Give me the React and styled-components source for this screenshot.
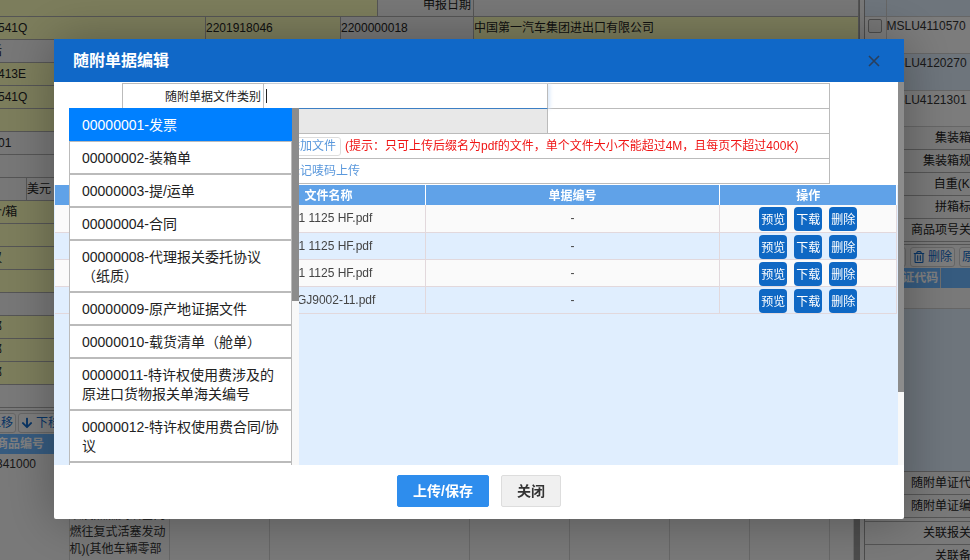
import { useState } from "react";
import styled, { createGlobalStyle } from "styled-components";
import { FaArrowDown, FaArrowUp, FaRegTrashAlt } from "react-icons/fa";

const formRows = [
  [{ width: 380, filled: true }, { width: 96, label: "申报日期" }, {}],
  [
    { width: 208, filled: true, text: "541Q" },
    { width: 135, filled: true, text: "2201918046" },
    { width: 133, text: "2200000018" },
    { filled: true, text: "中国第一汽车集团进出口有限公司" },
  ],
  [{ text: "话", scrolled: true }],
  [{ filled: true, text: "413E" }],
  [{ filled: true, text: "541Q" }],
  [{ filled: true }],
  [{ text: "01" }],
  [{}],
  [{ width: 29 }, { text: "美元" }],
  [{ filled: true, text: "个/箱", scrolled: true }],
  [{ filled: true }],
  [{ filled: true, text: "汉", scrolled: true }],
  [{ filled: true }],
  [{}],
  [{ filled: true, text: "邮", scrolled: true }],
  [{ filled: true, text: "邮", scrolled: true }],
  [{ filled: true, text: "邮", scrolled: true }],
];

const containers = ["MSLU4110570", "MSLU4120270", "MSLU4121301"];

const fileTypes = [
  "00000001-发票",
  "00000002-装箱单",
  "00000003-提/运单",
  "00000004-合同",
  "00000008-代理报关委托协议（纸质）",
  "00000009-原产地证据文件",
  "00000010-载货清单（舱单）",
  "00000011-特许权使用费涉及的原进口货物报关单海关编号",
  "00000012-特许权使用费合同/协议",
  "00000013-其他",
];

const files = [
  "B-1 1125 HF.pdf",
  "B-1 1125 HF.pdf",
  "B-1 1125 HF.pdf",
  "20GJ9002-11.pdf",
];

function Declaration() {
  return (
    <Main>
      <FormBoard>
        {formRows.map((row, i) => (
          <FormRow key={i}>
            {row.map((cell, j) => (
              <FormCell
                key={j}
                $width={cell.width}
                $filled={cell.filled}
                $label={cell.label}
                $scrolled={cell.scrolled}
              >
                {cell.label || cell.text}
              </FormCell>
            ))}
          </FormRow>
        ))}
      </FormBoard>
      <Divider $space={22} />
      <Divider $space={2} />
      <Toolbar $shift>
        <ToolButton type="button">
          <FaArrowUp />
          上移
        </ToolButton>
        <ToolButton type="button">
          <FaArrowDown />
          下移
        </ToolButton>
      </Toolbar>
      <GoodsWrap>
        <Goods>
          <colgroup>
            <col width="69" />
            <col width="100" />
            <col width="100" />
            <col width="200" />
            <col width="100" />
            <col width="100" />
            <col width="80" />
            <col width="80" />
            <col />
          </colgroup>
          <thead>
            <tr>
              <th>商品编号</th>
              <th colSpan={8} />
            </tr>
          </thead>
          <tbody>
            <tr>
              <td>341000</td>
              <td>
                其他专用于或主要用于机动车辆的发动机零件曲轴连杆以及点燃式活塞内燃往复式活塞发动机)(其他车辆零部
              </td>
              <td />
              <td />
              <td />
              <td />
              <td />
              <td />
              <td />
            </tr>
          </tbody>
        </Goods>
        <GoodsScroll />
      </GoodsWrap>
    </Main>
  );
}

function Sidebar() {
  return (
    <Side>
      <ContainerTable>
        <tbody>
          <tr>
            <td />
            <td />
          </tr>
          {containers.map((no) => (
            <tr key={no}>
              <td>
                <input type="checkbox" aria-label={no} />
              </td>
              <td>{no}</td>
            </tr>
          ))}
        </tbody>
      </ContainerTable>
      {["集装箱号", "集装箱规格", "自重(KG)", "拼箱标识", "商品项号关系"].map((t) => (
        <SideLabel key={t}>{t}</SideLabel>
      ))}
      <Divider $space={2} />
      <Toolbar $side>
        <ToolButton type="button">新增</ToolButton>
        <ToolButton type="button">
          <FaRegTrashAlt />
          删除
        </ToolButton>
        <ToolButton type="button">原产地</ToolButton>
      </Toolbar>
      <CodeTable>
        <thead>
          <tr>
            <th>随附单证代码</th>
            <th />
          </tr>
        </thead>
        <tbody>
          <tr>
            <td colSpan={2} />
          </tr>
        </tbody>
      </CodeTable>
      <SideBlank />
      <SideLabel>随附单证代码</SideLabel>
      <SideLabel>随附单证编号</SideLabel>
      <Divider $space={3} />
      <SideLabel>关联报关单</SideLabel>
      <SideLabel>关联备案</SideLabel>
    </Side>
  );
}

export default function App() {
  const [active, setActive] = useState(0);

  return (
    <>
      <GlobalStyle />
      <Page>
        <Declaration />
        <Sidebar />
      </Page>
      <Shade>
        <Dialog role="dialog" aria-labelledby="dialog-title">
          <DialogHeader>
            <h2 id="dialog-title">随附单据编辑</h2>
            <CloseButton type="button" aria-label="关闭窗口">
              <svg width="12" height="12" viewBox="0 0 12 12">
                <path d="M1 1L11 11M11 1L1 11" stroke="#2a3f5c" strokeWidth="1.6" />
              </svg>
            </CloseButton>
          </DialogHeader>
          <DialogBody>
            <Content>
              <UploadForm>
                <Field>
                  <label htmlFor="file-type">随附单据文件类别</label>
                  <InputBox $focused>
                    <Caret />
                    <input id="file-type" type="text" autoComplete="off" />
                  </InputBox>
                </Field>
                <Field>
                  <label htmlFor="file-no" aria-label="随附单据编号" />
                  <InputBox $disabled>
                    <input id="file-no" type="text" readOnly />
                  </InputBox>
                </Field>
                <Field>
                  <span />
                  <UploadLine>
                    <AddButton type="button">添加文件</AddButton>
                    <Hint>
                      (提示：只可上传后缀名为pdf的文件，单个文件大小不能超过4M，且每页不超过400K)
                    </Hint>
                  </UploadLine>
                </Field>
                <Field>
                  <span />
                  <UploadLine>
                    <MarkLink href="#mark">标记唛码上传</MarkLink>
                  </UploadLine>
                </Field>
              </UploadForm>
              <FileTable>
                <colgroup>
                  <col width="21%" />
                  <col width="23%" />
                  <col />
                  <col width="21%" />
                </colgroup>
                <thead>
                  <tr>
                    <th />
                    <th>文件名称</th>
                    <th>单据编号</th>
                    <th>操作</th>
                  </tr>
                </thead>
                <tbody>
                  {files.map((file, i) => (
                    <tr key={i}>
                      <td />
                      <td>{file}</td>
                      <td>-</td>
                      <td>
                        <Actions>
                          <ActionButton type="button">预览</ActionButton>
                          <ActionButton type="button">下载</ActionButton>
                          <ActionButton type="button">删除</ActionButton>
                        </Actions>
                      </td>
                    </tr>
                  ))}
                </tbody>
              </FileTable>
            </Content>
            <ScrollTrack>
              <ScrollThumb $size={81} />
            </ScrollTrack>
            <Dropdown>
              <Options role="listbox" aria-label="随附单据文件类别">
                {fileTypes.map((type, i) => (
                  <Option
                    key={type}
                    role="option"
                    aria-selected={i === active}
                    $active={i === active}
                    onClick={() => setActive(i)}
                  >
                    {type}
                  </Option>
                ))}
              </Options>
              <ScrollTrack $wide>
                <ScrollThumb $size={54} />
              </ScrollTrack>
            </Dropdown>
          </DialogBody>
          <DialogFooter>
            <FooterButton type="button" $primary>
              上传/保存
            </FooterButton>
            <FooterButton type="button">关闭</FooterButton>
          </DialogFooter>
        </Dialog>
      </Shade>
    </>
  );
}

const GlobalStyle = createGlobalStyle`
  * {
    box-sizing: border-box;
  }

  body {
    margin: 0;
    overflow: hidden;
  }

  body, button, input {
    font-family: "Liberation Sans", "Noto Sans CJK SC", sans-serif;
    font-size: 12px;
    line-height: 16px;
    color: #333;
  }

  table {
    border-collapse: collapse;
    table-layout: fixed;
  }
`;

const Page = styled.div`
  display: grid;
  grid-template-columns: minmax(0, 1fr) 106px;
  column-gap: 4px;
  height: 100vh;
  overflow: hidden;
  background: #f2f2f2;
`;

const Main = styled.main`
  display: flex;
  flex-direction: column;
  border-right: 1px solid #999;
  overflow: hidden;
`;

const FormBoard = styled.div`
  margin: -6px 0 0 -2px;
`;

const FormRow = styled.div`
  display: flex;
  height: 23px;
  border-bottom: 1px solid #aaa;
`;

const FormCell = styled.div`
  flex: ${({ $width }) => ($width ? `0 0 ${$width}px` : "1")};
  padding-right: ${({ $label }) => ($label ? "2px" : "0")};
  border-right: 1px solid #aaa;
  background: ${({ $filled }) => ($filled ? "#f8fab8" : "#eee")};
  color: #222;
  line-height: 22px;
  text-align: ${({ $label }) => ($label ? "right" : "left")};
  text-indent: ${({ $scrolled }) => ($scrolled ? "-8px" : "0")};
  white-space: nowrap;
`;

const Divider = styled.div`
  flex: none;
  height: ${({ $space }) => $space + 1}px;
  border-bottom: 1px solid #aaa;
`;

const Toolbar = styled.div`
  display: flex;
  flex: none;
  gap: ${({ $shift }) => ($shift ? "2px" : "4px")};
  height: 23px;
  padding: 2px 0 1px ${({ $side }) => ($side ? "11px" : "0")};
  margin-left: ${({ $shift }) => ($shift ? "-29px" : "0")};
`;

const ToolButton = styled.button`
  display: flex;
  flex: none;
  align-items: center;
  gap: 3px;
  padding: 0 2px;
  border: 1px solid #ccc;
  border-radius: 3px;
  background: #f8f8f8;
  color: #1068c8;
`;

const GoodsWrap = styled.div`
  display: flex;
  flex: 1;
`;

const GoodsScroll = styled.div`
  flex: 0 0 5px;
  background: #999;
`;

const Goods = styled.table`
  flex: 1;

  th {
    height: 20px;
    padding: 0;
    background: #6cb6ff;
    color: #fff;
    text-align: left;
    text-indent: -4px;
    white-space: nowrap;
  }

  td {
    padding: 2px 0;
    border-right: 1px solid #d0d0d0;
    line-height: 17px;
    vertical-align: top;
  }

  td:first-child {
    text-indent: -4px;
  }
`;

const Side = styled.aside`
  display: flex;
  flex-direction: column;
  margin-top: -21px;
  border-left: 1px solid #999;
  overflow: hidden;
`;

const ContainerTable = styled.table`
  flex: none;
  width: 122px;

  tr {
    height: 37px;
    background: #f8f8f8;
  }

  tr:nth-child(odd) {
    background: #dceaf8;
  }

  tr:last-child {
    height: 36px;
  }

  td {
    padding: 1px 0 0;
    border-bottom: 1px solid #ccc;
    vertical-align: top;
  }

  td:first-child {
    width: 21px;
    border-right: 1px solid #ccc;
  }

  input {
    width: 14px;
    height: 14px;
    margin: 1px 3px;
    appearance: none;
    border: 1px solid #999;
    border-radius: 2px;
    background: #eee;
  }
`;

const SideLabel = styled.div`
  flex: none;
  width: 118px;
  height: 23px;
  border-bottom: 1px solid #aaa;
  line-height: 22px;
  text-align: right;
  color: #222;
`;

const CodeTable = styled.table`
  flex: none;
  width: 122px;

  th {
    height: 20px;
    padding: 0;
    background: #6cb6ff;
    color: #fff;
    white-space: nowrap;
    border-right: 1px solid #ddd;
  }

  th:first-child {
    width: 75px;
  }

  td {
    height: 21px;
    border-bottom: 1px solid #ccc;
  }
`;

const SideBlank = styled.div`
  flex: none;
  height: 163px;
  border-bottom: 1px solid #aaa;
  background: #dceaf8;
`;

const Shade = styled.div`
  position: fixed;
  inset: 0;
  display: flex;
  padding: 39px 66px 41px 54px;
  background: rgba(0, 0, 0, 0.5);
`;

const Dialog = styled.section`
  display: flex;
  flex: 1;
  flex-direction: column;
  min-width: 0;
  border-radius: 2px;
  background: #fff;
  box-shadow: 1px 1px 50px rgba(0, 0, 0, 0.3);
`;

const DialogHeader = styled.header`
  display: flex;
  flex: none;
  align-items: center;
  justify-content: space-between;
  height: 43px;
  padding: 0 24px 0 19px;
  background: #1068c8;

  h2 {
    margin: 0;
    font-size: 16px;
    line-height: 24px;
    color: #fff;
  }
`;

const CloseButton = styled.button`
  display: flex;
  padding: 0;
  border: 0;
  background: none;
`;

const DialogBody = styled.div`
  position: relative;
  display: flex;
  flex: 1;
  min-height: 0;
  overflow: hidden;
`;

const Content = styled.div`
  display: flex;
  flex: 1;
  flex-direction: column;
  min-width: 0;
  padding: 1px 1px 0;
  background: linear-gradient(#fff 103px, #e0eefe 103px);
`;

const UploadForm = styled.form`
  margin: 0 67px 1px;
  border: 1px solid #bbb;
  border-bottom: 0;
`;

const Field = styled.div`
  display: grid;
  grid-template-columns: 141px 284px minmax(0, 1fr);
  height: 25px;
  border-bottom: 1px solid #bbb;

  > label,
  > span {
    padding: 1px 2px 0 0;
    border-right: 1px solid #bbb;
    line-height: 24px;
    text-align: right;
    color: #222;
  }
`;

const InputBox = styled.div`
  display: flex;
  align-items: center;
  padding-left: 2px;
  border-right: 1px solid #bbb;
  border-bottom: ${({ $focused }) => ($focused ? "1px solid #3c7fc4" : "0")};
  background: ${({ $disabled }) => ($disabled ? "#e8e8e8" : "#fff")};
  box-shadow: ${({ $focused }) => ($focused ? "2px 0 4px #dbe9fa" : "none")};

  input {
    flex: 1;
    min-width: 0;
    padding: 0;
    border: 0;
    outline: 0;
    background: none;
  }
`;

const Caret = styled.i`
  width: 1px;
  height: 14px;
  background: #222;
`;

const UploadLine = styled.div`
  display: flex;
  grid-column: 2 / -1;
  align-items: center;
  gap: 4px;
  padding-left: 19px;
  white-space: nowrap;
`;

const AddButton = styled.button`
  height: 19px;
  padding: 0 4px;
  border: 1px solid #ddd;
  border-radius: 3px;
  background: #fff;
  line-height: 17px;
  color: #5a98dc;
`;

const Hint = styled.span`
  color: #f01414;
`;

const MarkLink = styled.a`
  padding-left: 5px;
  color: #5a98dc;
  text-decoration: none;
`;

const FileTable = styled.table`
  width: 100%;

  th {
    height: 20px;
    padding: 2px 0 0;
    border-right: 1px solid #fff;
    background: #60a2e8;
    color: #fff;
  }

  td {
    height: 27px;
    padding: 0;
    border-right: 1px solid #e2d8dc;
    border-bottom: 1px solid #e2d8dc;
    text-align: center;
    color: #444;
  }

  td:nth-child(2) {
    padding-left: 2px;
  }

  tbody tr {
    background: #fafafa;
  }

  tbody tr:nth-child(even) {
    background: #e0eefe;
  }
`;

const Actions = styled.div`
  display: flex;
  justify-content: center;
  gap: 7px;
  padding-top: 2px;
`;

const ActionButton = styled.button`
  width: 28px;
  height: 24px;
  padding: 2px 0 0;
  border: 0;
  border-radius: 4px;
  background: #0f68c4;
  color: #fff;
`;

const ScrollTrack = styled.div`
  flex: 0 0 ${({ $wide }) => ($wide ? "7px" : "6px")};
  background: #f8f8f8;
`;

const ScrollThumb = styled.div`
  height: ${({ $size }) => $size}%;
  background: #8c8c8c;
`;

const Dropdown = styled.div`
  position: absolute;
  top: 26px;
  bottom: 0;
  left: 15px;
  display: flex;
  width: 230px;
`;

const Options = styled.ul`
  flex: 1;
  margin: 0;
  padding: 0;
  overflow: hidden;
  background: #fff;
  list-style: none;
`;

const Option = styled.li`
  padding: 7px 10px 5px 12px;
  border: 1px solid ${({ $active }) => ($active ? "#0080ff" : "#bbb")};
  background: ${({ $active }) => ($active ? "#0080ff" : "#fff")};
  font-size: 14px;
  line-height: 19px;
  color: ${({ $active }) => ($active ? "#fff" : "#222")};
`;

const DialogFooter = styled.footer`
  display: flex;
  flex: none;
  justify-content: center;
  gap: 12px;
  height: 54px;
  padding: 10px 0 12px;
`;

const FooterButton = styled.button`
  padding: 0 15px;
  border: 1px solid ${({ $primary }) => ($primary ? "#2e8ded" : "#ddd")};
  border-radius: 2px;
  background: ${({ $primary }) => ($primary ? "#2e8ded" : "#f0f0f0")};
  font-size: 14px;
  font-weight: 700;
  color: ${({ $primary }) => ($primary ? "#fff" : "#333")};
`;
